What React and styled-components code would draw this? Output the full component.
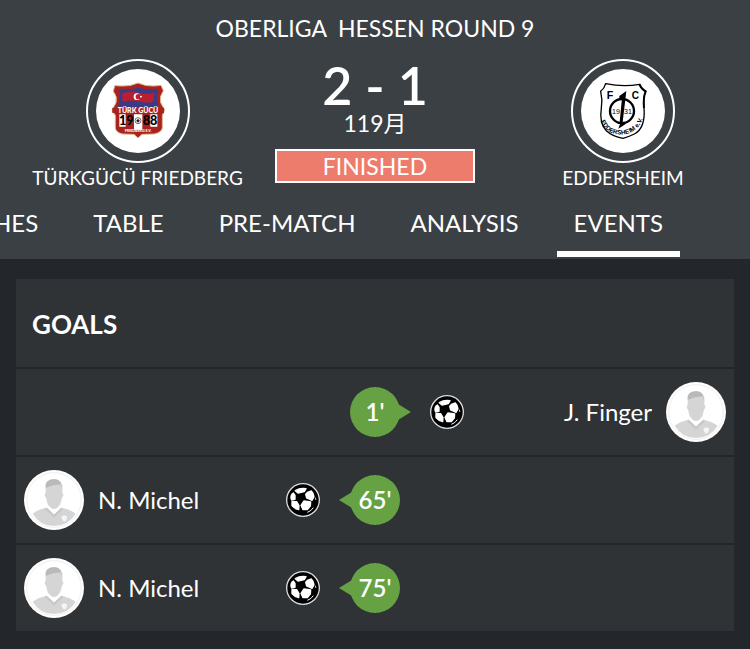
import React from "react";
import styled, { createGlobalStyle } from "styled-components";

const GlobalStyle = createGlobalStyle`
  * {
    box-sizing: border-box;
  }

  body {
    margin: 0;
    background: #23262b;
    color: #fff;
    font-family: Lato, "Noto Sans CJK SC", sans-serif;
    font-size: 24px;
    line-height: 32px;
  }
`;

const MatchHeader = styled.header`
  background: #3b4044;
  padding-top: 12px;
`;

const Competition = styled.h1`
  margin: 0;
  font-size: 23px;
  font-weight: 400;
  text-align: center;
  white-space: pre;
`;

const Scoreboard = styled.div`
  display: grid;
  grid-template-columns: 1fr 200px 1fr;
  padding-top: 15px;
`;

const Team = styled.div`
  display: flex;
  flex-direction: column;
  align-items: center;
  padding-left: ${(props) => (props.$away ? "21px" : "0")};
`;

const CrestRing = styled.div`
  display: flex;
  padding: 8px;
  border: 2px solid #fff;
  border-radius: 50%;
`;

const TeamName = styled.span`
  font-size: 19px;
  line-height: 30px;
  padding-bottom: 2px;
  white-space: nowrap;
`;

const Result = styled.div`
  display: flex;
  flex-direction: column;
  align-items: stretch;
  font-size: 23px;
  text-align: center;
`;

const Score = styled.strong`
  font-size: 52px;
  font-weight: 600;
  line-height: 52px;
`;

const MatchDate = styled.span`
  line-height: 24px;
`;

const Status = styled.span`
  margin-top: 14px;
  border: 2px solid #fff;
  background: #ee7c6c;
  line-height: 30px;
`;

const Tabs = styled.nav`
  display: flex;
  justify-content: flex-end;
  gap: 21px;
  padding: 12px 70px 2px 0;
  overflow: hidden;
`;

const Tab = styled.a`
  padding: 0 17px 12px;
  border-bottom: 6px solid ${(props) => (props.$active ? "#fff" : "transparent")};
  color: #fff;
  text-decoration: none;
  white-space: nowrap;
`;

const Card = styled.section`
  margin: 20px 16px;
`;

const CardTitle = styled.h2`
  margin: 0;
  padding: 2px 16px 0;
  background: #2f3335;
  font-size: 26px;
  font-weight: 700;
  line-height: 86px;
`;

const EventList = styled.ul`
  margin: 0;
  padding: 0;
  list-style: none;
`;

const EventRow = styled.li`
  display: grid;
  grid-template-columns: 1fr 50px 1fr;
  align-items: center;
  gap: 30px;
  height: 86px;
  margin-top: 2px;
  padding: 0 8px;
  background: #2f3335;
`;

const Side = styled.div`
  grid-row: 1;
  grid-column: ${(props) => (props.$away ? 3 : 1)};
  display: flex;
  flex-direction: ${(props) => (props.$away ? "row-reverse" : "row")};
  align-items: center;
  gap: 14px;
`;

const Player = styled.span`
  flex: 1;
  text-align: ${(props) => (props.$away ? "right" : "left")};
`;

const Minute = styled.span`
  grid-row: 1;
  grid-column: 2;
  position: relative;
  border-radius: 50%;
  background: #66a244;
  font-weight: 600;
  line-height: 50px;
  text-align: center;

  &::after {
    content: "";
    position: absolute;
    top: 17px;
    ${(props) => (props.$away ? "left" : "right")}: 48px;
    border: 8px solid transparent;
    border-width: 8px 0;
    border-${(props) => (props.$away ? "left" : "right")}: 13px solid #66a244;
  }
`;

const Drawing = styled.svg`
  display: block;
  flex: none;
  width: ${(props) => props.$size}px;
  height: ${(props) => props.$size}px;
`;

function FriedbergCrest() {
  return (
    <Drawing $size={84} viewBox="48 57 252 252" aria-hidden="true">
      <circle cx="174" cy="183" r="126" fill="#fff" />
      <path
        d="M104 107 L126 108 Q150 110 174 99 Q198 110 222 108 L243 106 L250 122 Q237 140 242 158 L254 180 L247 196 V234 Q244 248 222 252 L186 253 L174 264 L162 253 L128 252 Q108 248 106 234 V196 L96 181 L108 158 Q113 140 100 124 Z"
        fill="#a8231f"
        stroke="#dcb789"
        strokeWidth="3"
      />
      <path
        d="M118 119 Q150 121 174 113 Q200 121 234 117 Q227 142 235 172 H113 Q123 144 118 119 Z"
        fill="#3b3a85"
      />
      <path d="M126 130 Q152 123 174 128 Q198 135 224 128 L220 156 Q196 160 174 154 Q150 148 128 156 Z" fill="#b91f30" />
      <circle cx="171" cy="140" r="10" fill="#fff" />
      <circle cx="175" cy="140" r="8" fill="#b91f30" />
      <path d="M179 139 L187 137 L183 144 Z" fill="#fff" />
      <path d="M97 173 H252 V189 H97 Z" fill="#a8231f" />
      <path d="M118 193 H137 V230 H118 Z M162 193 H187 V239 H162 Z M211 193 H232 V230 H211 Z" fill="#fff" />
      <g fontFamily="Lato" fontWeight="900" textAnchor="middle">
        <text x="174" y="188" fontSize="21" fill="#fff">TÜRK GÜCÜ</text>
        <text x="128" y="226" fontSize="38">1</text>
        <text x="150" y="226" fontSize="38">9</text>
        <text x="199" y="226" fontSize="38">8</text>
        <text x="221" y="226" fontSize="38">8</text>
        <text x="174" y="247" fontSize="11" fill="#fff">FRIEDBERG E.V.</text>
      </g>
      <circle cx="174" cy="212" r="9" fill="#fff" stroke="#222" strokeWidth="2" />
      <path d="M174 207 L179 211 L177 217 H171 L169 211 Z" fill="#222" />
    </Drawing>
  );
}

function EddersheimCrest() {
  return (
    <Drawing $size={84} viewBox="48 57 252 252" aria-hidden="true">
      <defs>
        <path id="eddersheim-arc" d="M105 206 Q118 252 168 254 Q218 252 236 200" />
      </defs>
      <circle cx="174" cy="183" r="126" fill="#fff" />
      <path
        d="M122 101 Q174 112 224 103 Q228 116 242 124 Q234 142 237 174 Q242 234 208 252 Q192 260 174 265 Q142 259 124 242 Q102 220 109 174 Q113 148 107 124 Q118 116 122 101 Z"
        fill="#fff"
        stroke="#000"
        strokeWidth="4"
      />
      <path d="M224 103 Q228 116 242 124 Q234 142 237 174" fill="none" stroke="#000" strokeWidth="6" />
      <circle cx="171" cy="183" r="36" fill="none" stroke="#000" strokeWidth="7" />
      <path d="M184 123 L163 138 V144 H171 L164 216 H158 V222 H165 L160 236 L182 222 V216 H173 Z" fill="#000" />
      <g fontFamily="Liberation Sans" fontWeight="700" textAnchor="middle">
        <text x="135" y="146" fontSize="32">F</text>
        <text x="211" y="146" fontSize="30">C</text>
        <g fontWeight="400" fontSize="21">
          <text x="153" y="191">19</text>
          <text x="189" y="191">31</text>
        </g>
        <text fontSize="19">
          <textPath href="#eddersheim-arc" startOffset="50%">EDDERSHEIM e.V.</textPath>
        </text>
      </g>
    </Drawing>
  );
}

function Ball() {
  return (
    <Drawing $size={34} viewBox="270 78 102 102" role="img" aria-label="Goal">
      <circle cx="321" cy="129" r="51" fill="#ddd" />
      <circle cx="321" cy="129" r="47" fill="#000" />
      <g fill="#fff" stroke="#fff" strokeWidth="4" strokeLinejoin="round">
        <path d="M298 101 Q312 92 330 95 L325 104 L306 108 Z" />
        <path d="M334 106 L346 102 Q354 110 354 119 L348 130 L332 123 L329 112 Z" />
        <path d="M324 132 L344 135 L343 147 L334 158 L321 158 L315 145 Z" />
        <path d="M288 134 L302 134 L309 146 L308 158 Q296 156 288 146 Z" />
        <path d="M285 124 Q284 112 292 108 L297 115 L297 127 L287 129 Z" />
      </g>
      <path d="M334 166 Q346 162 352 152" fill="none" stroke="#fff" strokeWidth="3" />
      <path d="M359 120 L361 130 L357 127 Z" fill="#fff" />
    </Drawing>
  );
}

function Avatar() {
  return (
    <Drawing $size={60} viewBox="348 39 180 180" aria-hidden="true">
      <circle cx="438" cy="129" r="90" fill="#fff" />
      <circle cx="438" cy="129" r="82" fill="none" stroke="#eee" strokeWidth="3" />
      <path d="M374 170 Q388 158 416 152 L438 173 L460 152 Q488 158 503 170 Q480 207 438 207 Q396 207 374 170 Z" fill="#d5d5d5" />
      <path d="M416 152 L438 173 L460 152 L466 155 L438 182 L410 155 Z" fill="#c8c8c8" />
      <path d="M413 84 Q438 68 463 84 V108 Q468 108 465 118 L461 124 Q460 144 446 154 Q438 158 430 154 Q416 144 415 124 L411 118 Q409 108 413 108 Z" fill="#d5d5d5" />
      <path d="M413 92 Q409 68 438 66 Q465 67 463 100 L459 82 Q436 83 413 92 Z" fill="#b9b9b9" />
      <path d="M461 178 L469 175 L477 178 Q478 190 469 194 Q460 190 461 178 Z" fill="#f5f5f5" />
    </Drawing>
  );
}

const tabs = ["MATCHES", "TABLE", "PRE-MATCH", "ANALYSIS", "EVENTS"];

const goals = [
  { id: 1, player: "J. Finger", minute: "1'", away: true },
  { id: 2, player: "N. Michel", minute: "65'", away: false },
  { id: 3, player: "N. Michel", minute: "75'", away: false },
];

function Goal({ player, minute, away }) {
  return (
    <EventRow>
      <Side $away={away}>
        <Avatar />
        <Player $away={away}>{player}</Player>
        <Ball />
      </Side>
      <Minute $away={away}>{minute}</Minute>
    </EventRow>
  );
}

export default function App() {
  return (
    <>
      <GlobalStyle />
      <MatchHeader>
        <Competition>{"OBERLIGA  HESSEN ROUND 9"}</Competition>
        <Scoreboard>
          <Team>
            <CrestRing>
              <FriedbergCrest />
            </CrestRing>
            <TeamName>TÜRKGÜCÜ FRIEDBERG</TeamName>
          </Team>
          <Result>
            <Score>2 - 1</Score>
            <MatchDate>119月</MatchDate>
            <Status>FINISHED</Status>
          </Result>
          <Team $away>
            <CrestRing>
              <EddersheimCrest />
            </CrestRing>
            <TeamName>EDDERSHEIM</TeamName>
          </Team>
        </Scoreboard>
        <Tabs>
          {tabs.map((tab) => (
            <Tab key={tab} href={`#${tab.toLowerCase()}`} $active={tab === "EVENTS"}>
              {tab}
            </Tab>
          ))}
        </Tabs>
      </MatchHeader>
      <Card>
        <CardTitle>GOALS</CardTitle>
        <EventList>
          {goals.map((goal) => (
            <Goal key={goal.id} {...goal} />
          ))}
        </EventList>
      </Card>
    </>
  );
}
